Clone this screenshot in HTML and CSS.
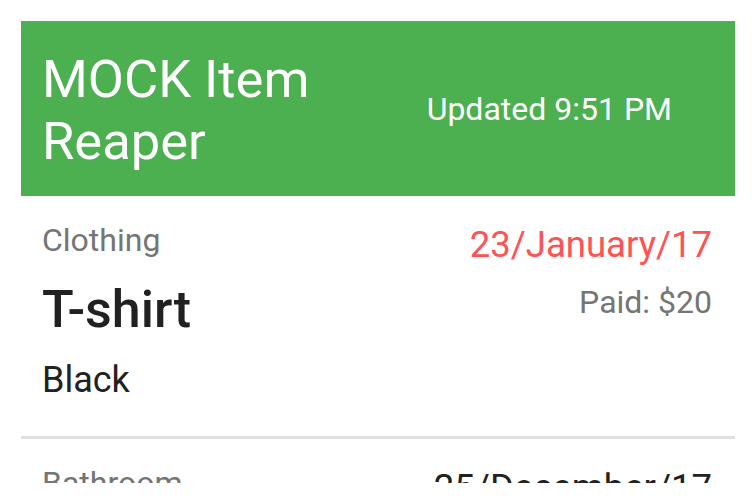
FILE: index.html
```html
<!DOCTYPE html>
<html lang="en">
<head>
<meta charset="utf-8">
<title>MOCK Item Reaper</title>
<link rel="stylesheet" href="styles.css">
</head>
<body>
<div class="screen">
  <header class="appbar">
    <h1 class="title">MOCK Item<br>Reaper</h1>
    <div class="updated">Updated 9:51 PM</div>
  </header>
  <ul class="items">
    <li class="item">
      <div class="item-left">
        <div class="category">Clothing</div>
        <div class="name">T-shirt</div>
        <div class="detail">Black</div>
      </div>
      <div class="item-right">
        <div class="date overdue">23/January/17</div>
        <div class="paid">Paid: $20</div>
      </div>
    </li>
    <li class="item">
      <div class="item-left">
        <div class="category">Bathroom</div>
      </div>
      <div class="item-right">
        <div class="date">25/December/17</div>
      </div>
    </li>
  </ul>
</div>
</body>
</html>
```
FILE: styles.css
```css
html, body {
  margin: 0;
  padding: 0;
  background: #ffffff;
}
body {
  font-family: Roboto, "Noto Sans", "Liberation Sans", sans-serif;
}
.screen {
  margin: 21px 21px 0 21px;
  height: 462px;
  overflow: hidden;
  background: #ffffff;
}
.appbar {
  height: 175px;
  background: #4caf50;
  display: flex;
  align-items: center;
  justify-content: space-between;
  padding: 0 63px 0 21px;
  box-sizing: border-box;
}
.title {
  margin: 0;
  font-size: 52.5px;
  font-weight: 400;
  line-height: 62px;
  color: #ffffff;
  padding-top: 2px;
}
.updated {
  font-size: 32px;
  line-height: 40px;
  color: #ffffff;
  padding-top: 1px;
}
.items {
  list-style: none;
  margin: 0;
  padding: 0;
}
.item {
  display: flex;
  justify-content: space-between;
  padding: 24px 23px 34px 21px;
  border-bottom: 3px solid #e0e0e0;
}
.category {
  font-size: 32px;
  line-height: 40px;
  color: #757575;
}
.name {
  font-size: 52px;
  line-height: 62px;
  font-weight: 500;
  color: #212121;
  margin-top: 19px;
}
.detail {
  font-size: 36px;
  line-height: 44px;
  color: #212121;
  margin-top: 17px;
}
.item-right {
  text-align: right;
  padding-top: 3px;
}
.date {
  font-size: 36.5px;
  line-height: 44px;
  color: #212121;
}
.date.overdue {
  color: #ff5252;
}
.paid {
  font-size: 32px;
  line-height: 40px;
  color: #757575;
  margin-top: 15px;
}
```
